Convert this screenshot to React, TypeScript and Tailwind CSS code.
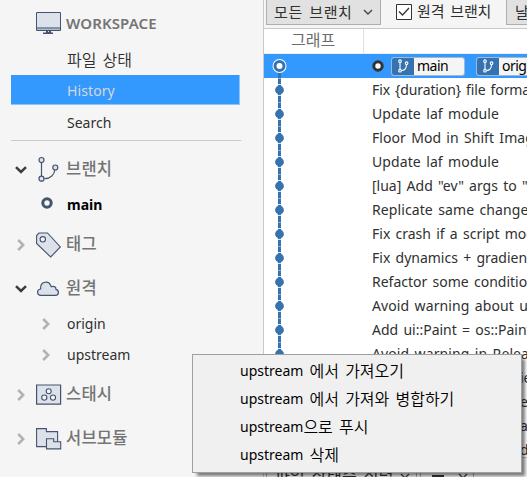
import React from "react";

const INK = "#44546f";
const FILL = "#dde1ea";

function Chevron({ open = false }: { open?: boolean }) {
  return open ? (
    <svg width="12" height="8" viewBox="0 0 12 8" fill="none" className="shrink-0">
      <path d="M1 1.2 6 6 11 1.2" stroke="#3c3c3c" strokeWidth="2.5" />
    </svg>
  ) : (
    <svg width="8" height="12" viewBox="0 0 8 12" fill="none" className="shrink-0">
      <path d="M1.2 1 6.2 6 1.2 11" stroke="#b2b2b2" strokeWidth="2.5" />
    </svg>
  );
}

function MonitorIcon() {
  return (
    <svg width="26" height="24" viewBox="0 0 26 24">
      <path d="M.5 1.5h24v18H.5z" fill={FILL} stroke={INK} />
      <path d="M1 16h23v2.5H1z" fill="#8491ab" />
      <path d="M10 20h5v2h-5zM7 21.5h10V23H7z" fill={INK} />
      <path d="M12 20h1v1h-1z" fill={FILL} />
    </svg>
  );
}

function BranchIcon() {
  return (
    <svg width="26" height="28" viewBox="0 0 26 28" fill="none" stroke={INK} strokeWidth="1.2">
      <path d="M5.5 6v14M8.5 22.7c6 0 10-4 10.6-9.7" />
      <circle cx="5.5" cy="4" r="2.5" fill={FILL} />
      <circle cx="5.5" cy="22.7" r="2.5" fill={FILL} />
      <circle cx="19.3" cy="11.5" r="2.5" fill={FILL} />
    </svg>
  );
}

function TagIcon() {
  return (
    <svg width="26" height="26" viewBox="0 0 26 26" stroke={INK} strokeWidth="1.1">
      <path d="M3 1h8.5l12.8 14-9.6 10L.6 11.5V3.5z" fill={FILL} />
      <circle cx="6.8" cy="7.3" r="2.7" fill="#f5f5f5" />
    </svg>
  );
}

function CloudIcon() {
  return (
    <svg width="26" height="18" viewBox="0 0 26 18">
      <path d="M5 15.4c-4.5-.2-4.5-6-.4-6.4C4 1.2 13-.5 15.3 6.8c3-1 5 .3 4.6 2.6 3.6.8 3.2 6-.4 6z" fill={FILL} stroke={INK} strokeWidth="1.2" />
    </svg>
  );
}

function StashIcon() {
  return (
    <svg width="26" height="22" viewBox="0 0 26 22" stroke={INK}>
      <path d="M.6 1h24v19.2H.6z" fill={FILL} strokeWidth="1.2" />
      <g fill="#f5f5f5" strokeWidth="1.1">
        <circle cx="12.7" cy="7.2" r="2.5" />
        <circle cx="8.3" cy="13.6" r="2.6" />
        <circle cx="17" cy="13.6" r="2.6" />
      </g>
    </svg>
  );
}

function SubmoduleIcon() {
  return (
    <svg width="26" height="22" viewBox="0 0 26 22" fill={FILL} stroke={INK} strokeWidth="1.1">
      <path d="M.6.6h9.8v3h11.2v15H.6z" />
      <path d="M10.5 10.7h7.2v3h7v7.2H10.5z" />
    </svg>
  );
}

function Group({ open, icon, label, className }: { open?: boolean; icon: React.ReactNode; label: string; className: string }) {
  return (
    <div className={`flex items-center ${className}`}>
      <div className="flex w-[36px] justify-center pl-[6px]"><Chevron open={open} /></div>
      <div className="flex w-[30px]">{icon}</div>
      <span className="mb-px text-[16.5px] font-medium tracking-[0.2px] text-[#747474]">{label}</span>
    </div>
  );
}

function RefBadge({ name, className }: { name: string; className: string }) {
  return (
    <div className={`flex h-[19px] shrink-0 items-center overflow-hidden rounded-[3px] border border-[#9fb9d5] bg-[#f5f5f5] text-black ${className}`}>
      <div className="flex h-full w-[22px] shrink-0 items-center justify-center bg-[#3572b0]">
        <svg width="12" height="14" viewBox="0 0 12 14" fill="none" stroke="white" strokeWidth="1.1">
          <path d="M3 3.5v7M4.5 11.5c3.4 0 5-2.5 5-6" />
          <circle cx="3" cy="2.2" r="1.3" />
          <circle cx="3" cy="11.7" r="1.3" />
          <circle cx="9.6" cy="4.2" r="1.3" />
        </svg>
      </div>
      <span className="pl-[3px] tracking-[-0.5px]">{name}</span>
    </div>
  );
}

function GraphCell() {
  return (
    <svg width="30" height="24" viewBox="0 0 30 24" className="shrink-0">
      <path d="M15.5 0v24" stroke="#3572b0" strokeWidth="3" />
      <path d="M14 6.5h3M14 17.5h3" stroke="#dce8f5" />
      <path d="M14 .5h3" stroke="#8fb3d8" />
      <circle cx="15.5" cy="12" r="4.4" fill="#3572b0" />
    </svg>
  );
}

const commits = [
  { text: "Fix {duration} file format", fit: "tracking-[-0.12px]" },
  { text: "Update laf module", fit: "tracking-[0.1px]" },
  { text: "Floor Mod in Shift Image", fit: "tracking-[0.05px]" },
  { text: "Update laf module", fit: "tracking-[0.1px]" },
  { text: "[lua] Add \"ev\" args to \"", fit: "tracking-[0px]" },
  { text: "Replicate same changes", fit: "tracking-[0.1px]" },
  { text: "Fix crash if a script mod", fit: "tracking-[0px]" },
  { text: "Fix dynamics + gradient", fit: "tracking-[0px]" },
  { text: "Refactor some condition", fit: "tracking-[0px]" },
  { text: "Avoid warning about un", fit: "tracking-[0.1px]" },
  { text: "Add ui::Paint = os::Paint", fit: "tracking-[0px]" },
  { text: "Avoid warning in Releas", fit: "tracking-[0.1px]" },
];

const menu = [
  ["upstream", " 에서 가져오기"],
  ["upstream", " 에서 가져와 병합하기"],
  ["upstream", "으로 푸시"],
  ["upstream", " 삭제"],
];

export default function App() {
  return (
    <div className="relative flex h-[477px] w-[527px] overflow-hidden whitespace-pre bg-[#f5f5f5] font-['Noto_Sans','Noto_Sans_CJK_KR',sans-serif] text-[14px] leading-none text-[#303030]">
      <aside className="flex w-[264px] shrink-0 flex-col border-r border-[#c9c9c9]">
        <div className="flex h-[46px] items-center pl-[36px]">
          <MonitorIcon />
          <span className="pl-[4px] text-[15px] font-semibold tracking-[0.1px] text-[#747474]">WORKSPACE</span>
        </div>
        <div className="flex h-[29px] items-center pb-[2px] pl-[67px] text-[16px] font-[350] [word-spacing:2px]">파일 상태</div>
        <div className="ml-[11px] flex h-[30px] w-[229px] items-center border-r border-b border-[#8dc4fc] bg-[#3399ff] pt-[3px] pl-[56px] tracking-[0.1px] text-[#d4d7dc]">History</div>
        <div className="flex h-[35px] items-center pl-[67px]">Search</div>
        <div className="ml-[11px] h-px w-[230px] bg-[#c9c9c9]" />
        <Group open icon={<BranchIcon />} label="브랜치" className="mt-[10px] h-[37px]" />
        <div className="flex h-[34px] items-center pl-[41px]">
          <svg width="12" height="12" viewBox="0 0 12 12" className="mb-[4px]"><circle cx="6" cy="6" r="4.2" fill="none" stroke={INK} strokeWidth="3" /></svg>
          <span className="pl-[14px] font-bold text-black">main</span>
        </div>
        <Group icon={<TagIcon />} label="태그" className="mt-[4px] h-[38px]" />
        <Group open icon={<CloudIcon />} label="원격" className="mt-[7px] h-[36px]" />
        <div className="pt-px">
          {["origin", "upstream"].map((r) => (
            <div key={r} className="flex h-[31px] items-center">
              <div className="w-[67px] pl-[42px]"><Chevron /></div>
              <span>{r}</span>
            </div>
          ))}
        </div>
        <Group icon={<StashIcon />} label="스태시" className="mt-[7px] h-[36px]" />
        <Group icon={<SubmoduleIcon />} label="서브모듈" className="mt-[8px] h-[36px]" />
      </aside>

      <main className="flex min-w-0 flex-1 flex-col overflow-hidden bg-white">
        <div className="flex h-[29px] shrink-0 border-b border-[#c9c9c9] bg-[#f5f5f5] text-[15px] [word-spacing:2px]">
          <div className="ml-[2px] flex h-[25px] w-[115px] shrink-0 items-center border border-t-0 border-[#adadad] bg-[#e1e1e1] pl-[7px]">
            <span className="w-[89px] tracking-[0.6px]">모든 브랜치</span>
            <svg width="10" height="7" viewBox="0 0 10 7" fill="none"><path d="m1 1 4 4 4-4" stroke="#444" strokeWidth="1.4" /></svg>
          </div>
          <div className="ml-[15px] flex h-[24px] w-[110px] shrink-0 items-center">
            <svg width="16" height="16" viewBox="0 0 16 16" fill="none" className="mr-[5px] shrink-0"><path d="M.5.5h15v15H.5z" fill="white" stroke="#333" /><path d="m3 7.5 3.5 3.5L13 4" stroke="#333" strokeWidth="1.3" /></svg>
            <span className="mb-px tracking-[-0.1px]">원격 브랜치</span>
          </div>
          <div className="flex h-[25px] w-[60px] shrink-0 items-center border border-t-0 border-[#adadad] bg-[#e1e1e1] pl-[8px]">날짜</div>
        </div>
        <div className="flex h-[25px] shrink-0 items-center border-b border-[#eeeeee] text-[16px] text-[#6c6c6c]">
          <div className="flex h-full w-[100px] items-center border-r border-[#e0e0e0] pb-[2px] pl-[27px]">그래프</div>
        </div>
        <div className="flex h-[24px] shrink-0 items-center bg-[#3399ff]">
          <svg width="30" height="24" viewBox="0 0 30 24" className="shrink-0">
            <path d="M15.5 12v12" stroke="#3572b0" strokeWidth="3" />
            <circle cx="15.5" cy="12" r="7" fill="white" />
            <circle cx="15.5" cy="12" r="4.5" fill="white" stroke="#3572b0" strokeWidth="3" />
          </svg>
          <svg width="12" height="12" viewBox="0 0 12 12" className="ml-[78px] shrink-0"><circle cx="6" cy="6" r="4.2" fill="white" stroke="#333" strokeWidth="3" /></svg>
          <RefBadge name="main" className="ml-[7px] w-[74px]" />
          <RefBadge name="origin/main" className="ml-[11px] w-[110px]" />
        </div>
        {commits.map((c, i) => (
          <div key={i} className="flex h-[24px] shrink-0 items-center">
            <GraphCell />
            <span className={`pl-[78px] [word-spacing:1.6px] ${c.fit}`}>{c.text}</span>
          </div>
        ))}
        <div className="h-[91px] shrink-0">
          {["ie", "e", "a", "d"].map((c) => (
            <div key={c} className="flex h-[24px] items-center pl-[256px]">{c}</div>
          ))}
        </div>
        <div className="flex h-[20px] shrink-0 border-t border-[#c9c9c9] bg-[#f5f5f5] pt-[6px] text-[15px]">
          <div className="ml-[2px] flex h-[25px] w-[151px] shrink-0 border border-[#adadad] pt-[3px] pl-[8px] [word-spacing:2px]">
            <span className="w-[125px] text-[16px] tracking-[0.4px]">파일 상태순 정렬</span>
            <svg width="10" height="7" viewBox="0 0 10 7" fill="none" className="mt-[5px]"><path d="m1 1 4 4 4-4" stroke="#444" strokeWidth="1.4" /></svg>
          </div>
          <div className="ml-[3px] flex h-[25px] w-[54px] shrink-0 border border-[#adadad] pl-[11px]">
            <span className="mt-[10px] h-[2px] w-[12px] bg-[#333]" />
            <svg width="10" height="7" viewBox="0 0 10 7" fill="none" className="mt-[8px] ml-[14px]"><path d="m1 1 4 4 4-4" stroke="#444" strokeWidth="1.4" /></svg>
          </div>
        </div>
      </main>

      <div className="absolute top-[354px] left-[192px] flex h-[119px] w-[330px] flex-col border border-[#a0a0a0] bg-[#f0f0f0] pt-[2px] shadow-[4px_4px_3px_-1px_rgba(0,0,0,0.5)]">
        {menu.map(([remote, action]) => (
          <div key={action} className="flex h-[28px] items-center pl-[47px] text-black">
            <span>{remote}</span>
            <span className="pb-px text-[16px] font-[350] [word-spacing:2px]">{action}</span>
          </div>
        ))}
      </div>
    </div>
  );
}
